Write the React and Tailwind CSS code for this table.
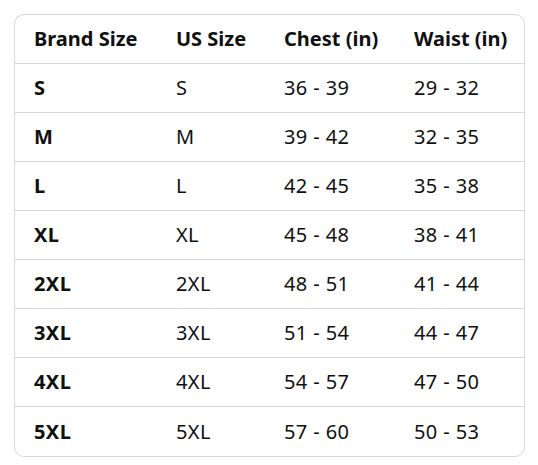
const rows = [
  ['S', 'S', '36 - 39', '29 - 32'],
  ['M', 'M', '39 - 42', '32 - 35'],
  ['L', 'L', '42 - 45', '35 - 38'],
  ['XL', 'XL', '45 - 48', '38 - 41'],
  ['2XL', '2XL', '48 - 51', '41 - 44'],
  ['3XL', '3XL', '51 - 54', '44 - 47'],
  ['4XL', '4XL', '54 - 57', '47 - 50'],
  ['5XL', '5XL', '57 - 60', '50 - 53'],
];

const cols = 'grid grid-cols-[141px_108px_130px_130px]';

export default function App() {
  return (
    <div className="min-h-[465px] bg-white p-[14px] font-['Noto_Sans',sans-serif] text-[20px] tracking-[0.4px] text-[#0f1111]">
      <div className="w-[511px] overflow-hidden rounded-[10px] border border-[#d5d9d9]">
        <div className={`${cols} h-[49px] items-center border-b border-[#d5d9d9] font-bold tracking-normal`}>
          <div className="pl-[19px]">Brand Size</div>
          <div className="pl-[20px]">US Size</div>
          <div className="pl-[20px]">Chest (in)</div>
          <div className="pl-[20px]">Waist (in)</div>
        </div>
        {rows.map((r, i) => (
          <div
            key={r[0]}
            className={`${cols} h-[49px] items-center ${i < rows.length - 1 ? 'border-b border-[#d5d9d9]' : ''}`}
          >
            <div className="pl-[19px] font-bold">{r[0]}</div>
            <div className="pl-[20px]">{r[1]}</div>
            <div className="pl-[20px]">{r[2]}</div>
            <div className="pl-[20px]">{r[3]}</div>
          </div>
        ))}
      </div>
    </div>
  );
}
